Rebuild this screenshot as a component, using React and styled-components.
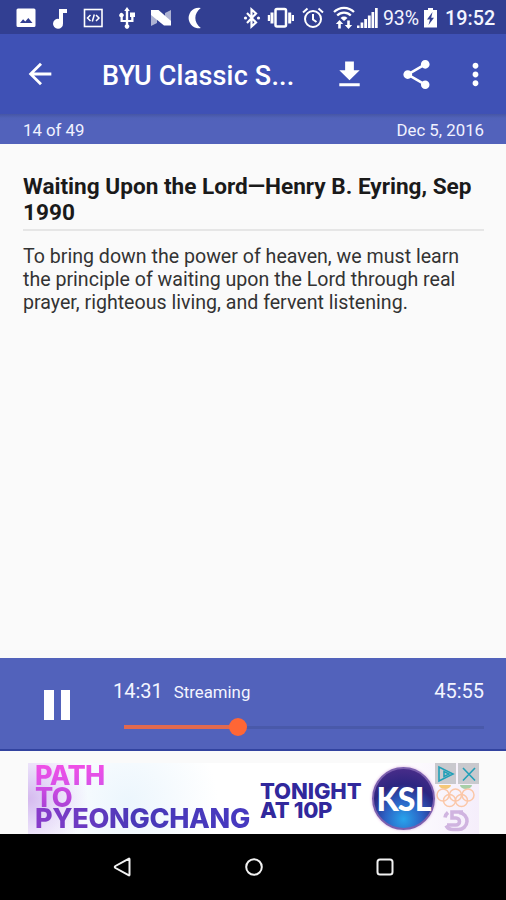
import React from "react";
import styled, { createGlobalStyle } from "styled-components";

const App = () => {
  return (
    <Screen>
      <GlobalStyle />
      <StatusBar />
      <AppBar />
      <InfoBar>
        <span>14 of 49</span>
        <span>Dec 5, 2016</span>
      </InfoBar>
      <Content>
        <Heading>Waiting Upon the Lord—Henry B. Eyring, Sep 1990</Heading>
        <Description>
          To bring down the power of heaven, we must learn the principle of
          waiting upon the Lord through real prayer, righteous living, and
          fervent listening.
        </Description>
      </Content>
      <Player elapsed={871} total={2755} />
      <Banner />
      <NavBar />
    </Screen>
  );
};

const StatusBar = () => (
  <StatusWrapper>
    <StatusIcon $gap={16} width="20" height="20" viewBox="0 0 20 20">
      <path
        fillRule="evenodd"
        d="M2 .5h16A1.500 1.500 0 0 1 19.500 2v15.500a1.500 1.500 0 0 1-1.500 1.500H2a1.500 1.500 0 0 1-1.500-1.500V2A1.500 1.500 0 0 1 2 .5zM4 15h12.500l-4.200-5-3 3.500-2.200-2.300z"
      />
    </StatusIcon>
    <StatusIcon $gap={15} width="18" height="22" viewBox="0 0 18 22">
      <path d="M8 2h8v4h-4v10.500a5 5 0 1 1-4-4.600z" />
    </StatusIcon>
    <StatusIcon $gap={14} width="21" height="20" viewBox="0 0 21 20">
      <rect x="1.500" y="1.500" width="17.500" height="17" fill="none" stroke="#fff" strokeWidth="1.600" />
      <path
        d="M7.500 7l-3 3 3 3M13 7l3 3-3 3M11.300 6.500l-2 7"
        fill="none"
        stroke="#fff"
        strokeWidth="1.500"
      />
    </StatusIcon>
    <StatusIcon $gap={14} width="18" height="22" viewBox="0 0 18 22">
      <path d="M9 0l2.800 4H10.200v9h3v-3H12V5.500h5V10h-1.500v5h-5.300v2.600a2.200 2.200 0 1 1-2.400 0V15H2.500v-4.800A2.200 2.200 0 1 1 4.800 10v3h3V4H6.200z" />
    </StatusIcon>
    <StatusIcon $gap={14} width="22" height="20" viewBox="0 0 22 20">
      <path d="M1 2l6 2v11l-6 3zM15 5l6-3v15l-6 0z" opacity="0.6" />
      <path d="M1 2h7.500L21 13v4.500h-7L1 7z" />
    </StatusIcon>
    <StatusIcon $gap={15} width="16" height="22" viewBox="0 0 16 22">
      <path d="M13.800 1A10.200 10.200 0 1 0 13.800 21C6.500 15.500 6.500 6.500 13.800 1z" />
    </StatusIcon>

    <StatusIcon $gap={40} width="18" height="22" viewBox="0 0 18 22">
      <path
        d="M4 6l9 9.500-4.500 4V2.500L13 6.500 4 16"
        fill="none"
        stroke="#fff"
        strokeWidth="2.200"
      />
      <circle cx="2.500" cy="11" r="1.600" />
      <circle cx="15.500" cy="11" r="1.600" />
    </StatusIcon>
    <StatusIcon $gap={6} width="28" height="22" viewBox="0 0 28 22">
      <rect x="8.500" y="2" width="10.500" height="17.500" rx="1.500" fill="none" stroke="#fff" strokeWidth="2.500" />
      <path d="M3.500 5.500H6.500v11H3.500zM21.200 5.500h3v11h-3zM.8 8h2.200v6H.8zM24.800 8H27v6h-2.200z" />
    </StatusIcon>
    <StatusIcon $gap={6} width="24" height="22" viewBox="0 0 24 22">
      <g fill="none" stroke="#fff" strokeWidth="2">
        <circle cx="12" cy="12" r="8" />
        <path d="M12 7v5.500l3.500 2.500M2 5.500l4.500-4M22 5.500l-4.500-4" />
      </g>
    </StatusIcon>
    <StatusIcon $gap={8} width="22" height="24" viewBox="0 0 22 24">
      <g fill="none" stroke="#fff" strokeWidth="2.200">
        <path d="M1 6a14 14 0 0 1 20 0M4.200 9.500a9.500 9.500 0 0 1 13.600 0" />
      </g>
      <path d="M7.500 12a5 5 0 0 1 7 0L11 15z" />
      <path d="M6.500 14l3.700 4H7.800v4.500H5.200V18H2.800zM15.500 23l3.700-4h-2.400v-4.500h-2.600V19h-2.400z" />
    </StatusIcon>
    <StatusIcon $gap={1} width="22" height="22" viewBox="0 0 22 22">
      <path d="M1 18.500h2.500V21H1zM4.600 15.500h2.700V21H4.600zM8.200 12h2.800v9H8.200zM11.900 8.500h2.800V21h-2.800zM15.500 5h2.700v16h-2.700zM19 1h2.700v20H19z" />
    </StatusIcon>
    <Percent>93%</Percent>
    <StatusIcon $gap={4} width="15" height="20" viewBox="0 0 15 20">
      <path
        fillRule="evenodd"
        d="M5 0h5v2h4v17.500H1V2h4zM9.500 4L4 11.500h3L5.500 17l5.500-7.200H8.200z"
      />
    </StatusIcon>
    <Clock>19:52</Clock>
  </StatusWrapper>
);

const AppBar = () => (
  <AppBarWrapper>
    <BackButton aria-label="Back">
      <svg width="34" height="34" viewBox="0 0 24 24">
        <path d="M20 11H7.830l5.590-5.590L12 4l-8 8 8 8 1.410-1.410L7.830 13H20v-2z" />
      </svg>
    </BackButton>
    <Title>BYU Classic S...</Title>
    <BarButton $left={37} aria-label="Download">
      <svg width="35" height="35" viewBox="0 0 24 24">
        <path d="M19 9h-4V3H9v6H5l7 7 7-7zM5 18v2h14v-2H5z" />
      </svg>
    </BarButton>
    <BarButton $left={32} aria-label="Share">
      <svg width="35" height="35" viewBox="0 0 24 24">
        <path d="M18 16.080c-.76 0-1.440.3-1.960.77L8.910 12.700c.05-.23.09-.46.09-.7s-.04-.47-.09-.7l7.050-4.110c.54.5 1.250.81 2.040.81 1.660 0 3-1.340 3-3s-1.340-3-3-3-3 1.340-3 3c0 .24.040.47.090.7L8.040 9.810C7.500 9.310 6.790 9 6 9c-1.660 0-3 1.340-3 3s1.340 3 3 3c.79 0 1.500-.31 2.040-.81l7.120 4.160c-.05.21-.08.43-.08.650 0 1.610 1.310 2.920 2.920 2.920s2.920-1.310 2.920-2.920-1.310-2.920-2.920-2.920z" />
      </svg>
    </BarButton>
    <BarButton $left={24} aria-label="More">
      <svg width="35" height="35" viewBox="0 0 24 24">
        <path d="M12 8c1.100 0 2-.9 2-2s-.9-2-2-2-2 .9-2 2 .9 2 2 2zm0 2c-1.100 0-2 .9-2 2s.9 2 2 2 2-.9 2-2-.9-2-2-2zm0 6c-1.100 0-2 .9-2 2s.9 2 2 2 2-.9 2-2-.9-2-2-2z" />
      </svg>
    </BarButton>
  </AppBarWrapper>
);

const formatTime = (seconds) =>
  Math.floor(seconds / 60) + ":" + String(seconds % 60).padStart(2, "0");

const Player = ({ elapsed, total }) => (
  <PlayerWrapper>
    <PauseButton aria-label="Pause">
      <PauseBar />
      <PauseBar />
    </PauseButton>
    <PlayerMain>
      <Times>
        <Time>{formatTime(elapsed)}</Time>
        <Streaming>Streaming</Streaming>
        <Time>{formatTime(total)}</Time>
      </Times>
      <Track>
        <Played style={{ width: (elapsed / total) * 100 + "%" }} />
        <Thumb />
        <Remaining />
      </Track>
    </PlayerMain>
  </PlayerWrapper>
);

const Banner = () => (
  <BannerWrapper>
    <Ad>
      <PathText>
        <PathLine $color="linear-gradient(#f04fe6, #d652e8)" $spacing="-0.6px">
          PATH
        </PathLine>
        <PathLine $color="linear-gradient(#cf4ce4, #a943d4)" $spacing="-0.6px">
          TO
        </PathLine>
        <PathLine
          $color="linear-gradient(90deg, #8a3ccb, #4a39b8 45%, #4639c0)"
          $spacing="-0.3px"
        >
          PYEONGCHANG
        </PathLine>
      </PathText>
      <TonightText>
        <TonightLine $spacing="-0.1px">TONIGHT</TonightLine>
        <TonightLine $spacing="-0.3px">AT 10P</TonightLine>
      </TonightText>
      <KslLogo>KSL</KslLogo>
      <Side>
        <AdChoices>
          <AdButton>
            <svg width="20" height="18" viewBox="0 0 20 18">
              <path d="M3 2v14L17 9z" />
              <path d="M8 6.500v5l5-2.500z" />
            </svg>
          </AdButton>
          <AdButton>
            <svg width="20" height="18" viewBox="0 0 20 18">
              <path d="M4 3l12 12.500M16 3L4 15.500" />
            </svg>
          </AdButton>
        </AdChoices>
        <svg width="44" height="50" viewBox="0 0 44 50">
          <path d="M4 1a6 4 0 0 0 12 0z" fill="#f5c878" />
          <path d="M25 1a6 4 0 0 0 12 0z" fill="#a8cfa8" />
          <g fill="none" stroke="#fbc7a8" strokeWidth="1.500">
            <circle cx="8" cy="11" r="6" />
            <circle cx="20.500" cy="11" r="6" />
            <circle cx="33" cy="11" r="6" />
            <circle cx="14.500" cy="16.500" r="6" />
            <circle cx="26.500" cy="16.500" r="6" />
          </g>
          <g fill="none" stroke="#d0b4e0" strokeWidth="3.600">
            <path d="M28 28H17v6h4a3.500 3.500 0 0 1 0 7h-9" />
            <path d="M24 28.500a8.500 8.500 0 0 1-1 17h-5a8 8 0 0 1-7-4M13 28.500a8 8 0 0 0-3 5" />
          </g>
        </svg>
      </Side>
    </Ad>
  </BannerWrapper>
);

const NavBar = () => (
  <NavWrapper>
    <NavButton aria-label="Back">
      <svg width="22" height="22" viewBox="0 0 22 22">
        <path d="M17.500 3.200v15.600Q17.500 19.800 16.500 19.200L3.500 12Q2 11 3.500 10L16.500 2.800Q17.500 2.200 17.500 3.200z" />
      </svg>
    </NavButton>
    <NavButton aria-label="Home">
      <svg width="22" height="22" viewBox="0 0 22 22">
        <circle cx="11" cy="11" r="7.800" />
      </svg>
    </NavButton>
    <NavButton aria-label="Recents">
      <svg width="22" height="22" viewBox="0 0 22 22">
        <rect x="3.500" y="3.500" width="15" height="15" rx="2.500" />
      </svg>
    </NavButton>
  </NavWrapper>
);

const GlobalStyle = createGlobalStyle`
  * {
    box-sizing: border-box;
  }
  body {
    margin: 0;
    font-family: Roboto, sans-serif;
  }
  svg {
    display: block;
    flex: none;
  }
`;

const Screen = styled.div`
  display: flex;
  flex-direction: column;
  width: 506px;
  height: 900px;
  overflow: hidden;
  background: #fafafa;
`;

const StatusWrapper = styled.div`
  display: flex;
  align-items: center;
  height: 34px;
  flex: none;
  padding-top: 2px;
  background: #323f92;
  color: #f4f5ff;
`;

const StatusIcon = styled.svg`
  margin-left: ${(props) => props.$gap}px;
  fill: #fff;
`;

const Percent = styled.span`
  margin-left: 5px;
  width: 36px;
  padding-top: 1px;
  font-size: 19.5px;
  letter-spacing: -0.1px;
  white-space: nowrap;
`;

const Clock = styled.span`
  margin-left: 7px;
  padding-top: 1px;
  font-size: 19.8px;
  font-weight: 500;
`;

const AppBarWrapper = styled.header`
  display: flex;
  align-items: center;
  height: 80px;
  flex: none;
  background: #3f51b5;
  color: #fff;
`;

const BarButton = styled.button`
  margin-left: ${(props) => props.$left}px;
  padding: 0;
  border: none;
  background: none;
  fill: #fff;
`;

const BackButton = styled(BarButton)`
  margin-left: 23px;
`;

const Title = styled.h1`
  margin: 3px 0 0 45px;
  width: 193px;
  font-size: 27px;
  font-weight: 500;
  letter-spacing: 0.2px;
  white-space: nowrap;
`;

const InfoBar = styled.div`
  display: flex;
  justify-content: space-between;
  align-items: center;
  height: 30px;
  flex: none;
  padding: 1px 22px 0 23px;
  background: linear-gradient(#4656a5, #5062b8 4px, #5262bb 7px);
  color: #f1f2ff;
  font-size: 16.8px;
`;

const Content = styled.main`
  flex: 1;
  padding: 30px 22px 0 23px;
`;

const Heading = styled.h2`
  margin: 0;
  padding-bottom: 3px;
  border-bottom: 2px solid #e6e6e6;
  color: #1a1a1a;
  font-size: 22.6px;
  font-weight: 700;
  line-height: 26px;
`;

const Description = styled.p`
  margin: 14px 0 0;
  color: #333;
  font-size: 19.6px;
  line-height: 23px;
`;

const PlayerWrapper = styled.section`
  display: flex;
  height: 93px;
  flex: none;
  border-bottom: 2px solid #32439f;
  background: #5262bb;
  color: #f4f5ff;
`;

const PauseButton = styled.button`
  display: flex;
  align-items: center;
  gap: 7px;
  width: 113px;
  padding: 3px 0 0 44px;
  border: none;
  background: none;
`;

const PauseBar = styled.span`
  width: 9.5px;
  height: 30px;
  background: #fff;
`;

const PlayerMain = styled.div`
  flex: 1;
  padding: 21px 22px 0 0;
`;

const Times = styled.div`
  display: flex;
  align-items: baseline;
  height: 24px;
`;

const Time = styled.span`
  font-size: 20px;
`;

const Streaming = styled.span`
  flex: 1;
  margin-left: 11px;
  font-size: 16.8px;
`;

const Track = styled.div`
  display: flex;
  align-items: center;
  height: 18px;
  margin: 15px 0 0 11px;
`;

const Played = styled.div`
  height: 4px;
  background: #e1694f;
`;

const Thumb = styled.div`
  flex: none;
  width: 18px;
  height: 18px;
  margin: 0 -9px;
  border-radius: 50%;
  background: #ff6635;
  z-index: 1;
`;

const Remaining = styled.div`
  flex: 1;
  height: 3px;
  background: #4959aa;
`;

const BannerWrapper = styled.div`
  height: 83px;
  flex: none;
  padding: 12px 27px 0 28px;
`;

const Ad = styled.div`
  display: flex;
  height: 71px;
  overflow: hidden;
  background: radial-gradient(circle at 0 50%, #d5b9ee 0, #e0d0f6 18px, transparent 60px),
    radial-gradient(circle at 100px 40px, #ecf6fd, transparent 90px),
    linear-gradient(90deg, #fff 80%, #f5eefb);
  font-family: Inter, sans-serif;
`;

const PathText = styled.div`
  width: 232px;
  flex: none;
  padding: 2px 0 0 7px;
`;

const PathLine = styled.div`
  width: max-content;
  padding-right: 3px;
  background: ${(props) => props.$color};
  background-clip: text;
  color: transparent;
  font-size: 27px;
  font-weight: 800;
  line-height: 21.5px;
  letter-spacing: ${(props) => props.$spacing};
`;

const TonightText = styled.div`
  width: 109px;
  flex: none;
  padding-top: 19px;
`;

const TonightLine = styled.div`
  color: #31289c;
  font-size: 22px;
  font-weight: 800;
  line-height: 19px;
  letter-spacing: ${(props) => props.$spacing};
  white-space: nowrap;
`;

const KslLogo = styled.div`
  display: flex;
  justify-content: center;
  align-items: center;
  width: 63px;
  height: 63px;
  flex: none;
  margin: 4px 0 0 3px;
  border: 2px solid #7b5fae;
  border-radius: 50%;
  background: radial-gradient(circle at 50% 85%, #28a4ec, #2c62c4 32%, #2c2580 60%, #56308e);
  box-shadow: 0 0 3px #d6a5dc;
  color: #fff;
  font-family: Lato, sans-serif;
  font-size: 32px;
  font-weight: 900;
  letter-spacing: -0.8px;
`;

const Side = styled.div`
  width: 44px;
  flex: none;
`;

const AdChoices = styled.div`
  display: flex;
  gap: 2px;
  width: 44px;
  height: 21px;
`;

const AdButton = styled.span`
  display: flex;
  justify-content: center;
  align-items: center;
  width: 21px;
  height: 21px;
  background: #c9c9ce;
  fill: none;
  stroke: #22a0b8;
  stroke-width: 1.6px;
`;

const NavWrapper = styled.nav`
  display: flex;
  justify-content: center;
  align-items: center;
  gap: 109px;
  height: 66px;
  flex: none;
  padding-left: 2px;
  background: #000;
`;

const NavButton = styled.button`
  padding: 0;
  border: none;
  background: none;
  fill: none;
  stroke: #f2f2f2;
  stroke-width: 2px;
`;

export default App;
